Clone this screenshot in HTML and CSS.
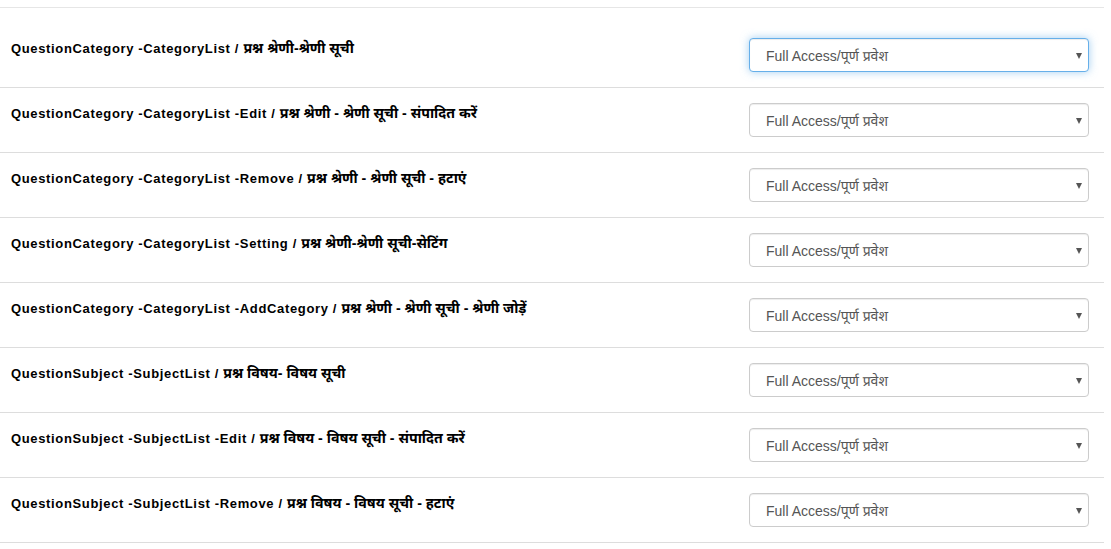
FILE: index.html
```html
<!DOCTYPE html>
<html lang="hi">
<head>
<meta charset="utf-8">
<title>Permissions</title>
<link rel="stylesheet" href="styles.css">
</head>
<body>
<div class="panel">
  <div class="panel-top"></div>
  <div class="perm-list">
    <div class="perm-row first">
      <div class="perm-label"><span class="en">QuestionCategory -CategoryList / </span><span class="hi">प्रश्न श्रेणी-श्रेणी सूची</span></div>
      <div class="select-wrap"><select class="perm-select focused"><option>Full Access/पूर्ण प्रवेश</option></select></div>
    </div>
    <div class="perm-row">
      <div class="perm-label"><span class="en">QuestionCategory -CategoryList -Edit / </span><span class="hi">प्रश्न श्रेणी - श्रेणी सूची - संपादित करें</span></div>
      <div class="select-wrap"><select class="perm-select"><option>Full Access/पूर्ण प्रवेश</option></select></div>
    </div>
    <div class="perm-row">
      <div class="perm-label"><span class="en">QuestionCategory -CategoryList -Remove / </span><span class="hi">प्रश्न श्रेणी - श्रेणी सूची - हटाएं</span></div>
      <div class="select-wrap"><select class="perm-select"><option>Full Access/पूर्ण प्रवेश</option></select></div>
    </div>
    <div class="perm-row">
      <div class="perm-label"><span class="en">QuestionCategory -CategoryList -Setting / </span><span class="hi">प्रश्न श्रेणी-श्रेणी सूची-सेटिंग</span></div>
      <div class="select-wrap"><select class="perm-select"><option>Full Access/पूर्ण प्रवेश</option></select></div>
    </div>
    <div class="perm-row">
      <div class="perm-label"><span class="en">QuestionCategory -CategoryList -AddCategory / </span><span class="hi">प्रश्न श्रेणी - श्रेणी सूची - श्रेणी जोड़ें</span></div>
      <div class="select-wrap"><select class="perm-select"><option>Full Access/पूर्ण प्रवेश</option></select></div>
    </div>
    <div class="perm-row">
      <div class="perm-label"><span class="en">QuestionSubject -SubjectList / </span><span class="hi">प्रश्न विषय- विषय सूची</span></div>
      <div class="select-wrap"><select class="perm-select"><option>Full Access/पूर्ण प्रवेश</option></select></div>
    </div>
    <div class="perm-row">
      <div class="perm-label"><span class="en">QuestionSubject -SubjectList -Edit / </span><span class="hi">प्रश्न विषय - विषय सूची - संपादित करें</span></div>
      <div class="select-wrap"><select class="perm-select"><option>Full Access/पूर्ण प्रवेश</option></select></div>
    </div>
    <div class="perm-row last">
      <div class="perm-label"><span class="en">QuestionSubject -SubjectList -Remove / </span><span class="hi">प्रश्न विषय - विषय सूची - हटाएं</span></div>
      <div class="select-wrap"><select class="perm-select"><option>Full Access/पूर्ण प्रवेश</option></select></div>
    </div>
  </div>
</div>
</body>
</html>
```

FILE: styles.css
```css
html, body {
  margin: 0;
  padding: 0;
  background: #fff;
}

body {
  font-family: "Liberation Sans", Arial, "Noto Sans Devanagari", "Lohit Devanagari", sans-serif;
  color: #000;
}

.panel {
  width: 1104px;
}

.panel-top {
  height: 7px;
  border-bottom: 1px solid #e6e6e6;
  margin-bottom: 15px;
}

.perm-row {
  display: flex;
  justify-content: space-between;
  align-items: flex-start;
  padding: 15px 15px 15px 11px;
  border-top: 1px solid #ddd;
}

.perm-row.first {
  border-top: none;
}

.perm-row.last {
  border-bottom: 1px solid #ddd;
}

.perm-label {
  font-size: 13px;
  font-weight: bold;
  line-height: 20px;
  white-space: nowrap;
}

.perm-label .en {
  letter-spacing: 0.65px;
}

.perm-label .hi {
  font-size: 14.2px;
}

.select-wrap {
  position: relative;
  width: 340px;
  height: 34px;
}

.select-wrap::after {
  content: "";
  position: absolute;
  right: 7px;
  top: 15px;
  width: 0;
  height: 0;
  border-left: 3.5px solid transparent;
  border-right: 3.5px solid transparent;
  border-top: 6px solid #555;
  pointer-events: none;
}

.perm-select {
  -webkit-appearance: none;
  appearance: none;
  box-sizing: border-box;
  width: 340px;
  height: 34px;
  margin: 0;
  padding: 2px 24px 0 16px;
  font-family: "Liberation Sans", Arial, "Noto Sans Devanagari", "Lohit Devanagari", sans-serif;
  font-size: 14px;
  color: #555;
  background: #fff;
  border: 1px solid #ccc;
  border-radius: 4px;
  box-shadow: inset 0 1px 1px rgba(0, 0, 0, 0.075);
  outline: none;
}

.perm-select.focused {
  border-color: #66afe9;
  box-shadow: inset 0 1px 1px rgba(0, 0, 0, 0.075), 0 0 8px rgba(102, 175, 233, 0.6);
}
```
